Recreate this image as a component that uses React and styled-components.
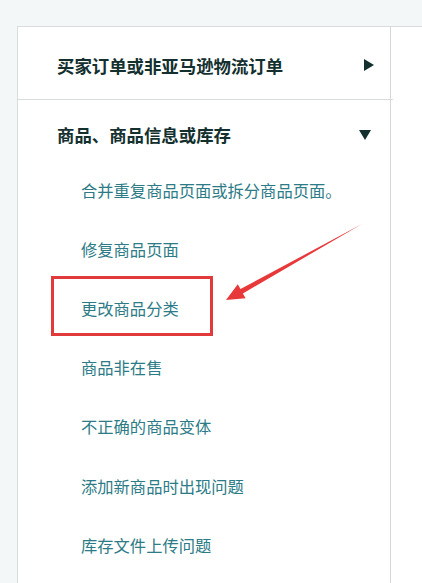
import React from "react";
import styled, { createGlobalStyle } from "styled-components";

const Global = createGlobalStyle`
  html, body { margin: 0; padding: 0; }
  body {
    background: #f4f7f8;
    font-family: "Noto Sans CJK SC", "Noto Sans", sans-serif;
    width: 422px;
    height: 583px;
    overflow: hidden;
  }
`;

const Page = styled.div`
  padding: 26px 0 0 17px;
  height: 583px;
  box-sizing: border-box;
`;

const Frame = styled.div`
  position: relative;
  display: flex;
  background: #fff;
  border-top: 1px solid #d9dcdd;
  border-left: 1px solid #d9dcdd;
  height: 100%;
`;

const Column = styled.div`
  width: 373px;
  border-right: 1.5px solid #d5d8d9;
  box-sizing: border-box;
`;

const Section = styled.div`
  border-bottom: ${(p) => (p.$divider ? "1px solid #d9dcdd" : "none")};
  margin-right: ${(p) => (p.$divider ? "-3px" : "0")};
`;

const Header = styled.div`
  display: flex;
  align-items: center;
  justify-content: space-between;
  height: ${(p) => p.$h}px;
  padding: ${(p) => p.$pt}px 19px 0 39px;
  box-sizing: border-box;
  font-size: 17.4px;
  font-weight: 700;
  color: #13302f;
`;

const Triangle = styled.span`
  width: 0;
  height: 0;
  ${(p) =>
    p.$open
      ? `border-left: 6px solid transparent; border-right: 6px solid transparent; border-top: 10px solid #13302f;`
      : `border-top: 6.5px solid transparent; border-bottom: 6.5px solid transparent; border-left: 10px solid #13302f;`}
`;

const LinkList = styled.div`
  display: flex;
  flex-direction: column;
  padding-top: 1px;
`;

const LinkItem = styled.a`
  display: flex;
  align-items: center;
  height: 59.2px;
  padding-left: 63px;
  font-size: 16.3px;
  color: #2c7b86;
  text-decoration: none;
  white-space: nowrap;
`;

const Highlight = styled.div`
  position: absolute;
  left: 33px;
  top: 249px;
  width: 162px;
  height: 60px;
  border: 3px solid #e03a3b;
  box-sizing: border-box;
`;

const ArrowSvg = styled.svg`
  position: absolute;
  left: 0;
  top: 0;
  pointer-events: none;
`;

const links = [
  "合并重复商品页面或拆分商品页面。",
  "修复商品页面",
  "更改商品分类",
  "商品非在售",
  "不正确的商品变体",
  "添加新商品时出现问题",
  "库存文件上传问题",
];

export default function App() {
  return (
    <>
      <Global />
      <Page>
        <Frame>
          <Column>
            <Section $divider>
              <Header $h={72} $pt={4}>
                <span>买家订单或非亚马逊物流订单</span>
                <Triangle />
              </Header>
            </Section>
            <Section>
              <Header $h={59} $pt={10}>
                <span>商品、商品信息或库存</span>
                <Triangle $open />
              </Header>
              <LinkList>
                {links.map((l) => (
                  <LinkItem key={l}>{l}</LinkItem>
                ))}
              </LinkList>
            </Section>
          </Column>
          <Highlight />
          <ArrowSvg width="405" height="557" viewBox="17 26 405 557">
            <polygon
              points="361,223 239.5,288 236.8,283.2 225,299 244.6,297.2 241.9,292.4"
              fill="#e8393a"
            />
          </ArrowSvg>
        </Frame>
      </Page>
    </>
  );
}
